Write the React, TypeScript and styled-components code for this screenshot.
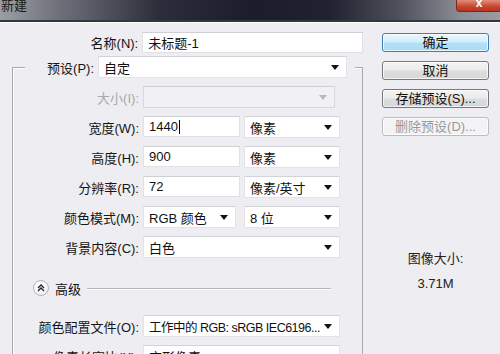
import React from "react";
import styled, { createGlobalStyle } from "styled-components";

const GlobalStyle = createGlobalStyle`
  html, body {
    margin: 0;
    padding: 0;
    background: #eeedf1;
  }
  body {
    font-family: "Liberation Sans", "Noto Sans CJK SC", sans-serif;
    font-size: 13px;
    color: #111;
  }
`;

const Window = styled.div`
  width: 500px;
  height: 354px;
  overflow: hidden;
  background: #eeedf1;
`;

const TitleBar = styled.div`
  height: 20px;
  display: flex;
  align-items: flex-start;
  justify-content: space-between;
  background: linear-gradient(
    90deg,
    #9c9ea5 0%,
    #6d7079 12%,
    #2b2e3a 32%,
    #1b1e2a 50%,
    #20232f 66%,
    #4f525d 80%,
    #8a8d95 92%,
    #9a9ca2 100%
  );
  border-bottom: 2px solid #34363e;
  box-shadow: 0 1px 0 #ffffff;
`;

const TitleText = styled.span`
  color: #1a1a1a;
  font-size: 13px;
  line-height: 13px;
  margin-top: -1px;
  padding-left: 1px;
`;

const CloseButton = styled.div`
  width: 44px;
  height: 11px;
  margin-right: -2px;
  background: linear-gradient(180deg, #e08f7c 0%, #c9452e 60%, #b83320 100%);
  border: 1px solid #7b2a1f;
  border-top: none;
  border-radius: 0 0 0 4px;
  display: flex;
  justify-content: center;
  color: #fff;
  font-size: 12px;
  line-height: 6px;
  font-weight: bold;
`;

const Body = styled.div`
  display: flex;
  align-items: flex-start;
`;

const LeftPane = styled.div`
  width: 363px;
  display: flex;
  flex-direction: column;
`;

const NameRow = styled.div`
  display: flex;
  align-items: center;
  margin-top: 10px;
  height: 20px;
`;

const Label = styled.label<{ $width: number; $disabled?: boolean }>`
  width: ${(p) => p.$width}px;
  text-align: right;
  padding-right: 4px;
  box-sizing: border-box;
  white-space: nowrap;
  color: ${(p) => (p.$disabled ? "#a8a8ac" : "#151515")};
  font-size: 13px;
`;

const TextBox = styled.div<{ $width: number }>`
  width: ${(p) => p.$width}px;
  height: 21px;
  box-sizing: border-box;
  background: #fff;
  border: 1px solid #e1e1e4;
  border-top-color: #cfcfd3;
  padding-left: 5px;
  display: flex;
  align-items: center;
  font-size: 13px;
  color: #111;
`;

const Caret = styled.span`
  display: inline-block;
  width: 1px;
  height: 14px;
  background: #000;
  margin-left: 1px;
`;

const SelectBox = styled.div<{ $width: number; $disabled?: boolean }>`
  width: ${(p) => p.$width}px;
  height: 22px;
  box-sizing: border-box;
  background: ${(p) => (p.$disabled ? "#f1f0f3" : "#fff")};
  border: 1px solid ${(p) => (p.$disabled ? "#d8d8dc" : "#e3e3e6")};
  border-top-color: ${(p) => (p.$disabled ? "#d0d0d4" : "#d3d3d7")};
  padding: 0 7px 0 5px;
  display: flex;
  align-items: center;
  justify-content: space-between;
  font-size: 13px;
  color: #111;
  white-space: nowrap;
`;

const SelectValue = styled.span<{ $tight?: boolean }>`
  font-size: ${(p) => (p.$tight ? "12.5px" : "13px")};
  letter-spacing: ${(p) => (p.$tight ? "-0.5px" : "0")};
`;

const Arrow = styled.span<{ $disabled?: boolean }>`
  flex: none;
  width: 0;
  height: 0;
  border-left: 4px solid transparent;
  border-right: 4px solid transparent;
  border-top: 5px solid ${(p) => (p.$disabled ? "#b8b8bc" : "#111")};
`;

const Group = styled.fieldset`
  margin: 4px 0 0 12px;
  padding: 0 0 40px 0;
  width: 351px;
  box-sizing: border-box;
  border: 1px solid #a9a9ae;
  border-bottom: none;
  box-shadow: inset 1px 1px 0 #fff;
  min-width: 0;
`;

const Legend = styled.legend`
  margin-left: 12px;
  padding: 0 8px 0 0;
  display: flex;
  align-items: center;
  background: #eeedf1;
`;

const Rows = styled.div`
  display: flex;
  flex-direction: column;
  gap: 8px;
  margin-top: 8px;
`;

const Row = styled.div`
  display: flex;
  align-items: center;
  height: 22px;
`;

const Pair = styled.div<{ $gap?: number }>`
  display: flex;
  gap: ${(p) => p.$gap ?? 4}px;
`;

const Advanced = styled.div`
  display: flex;
  align-items: center;
  margin: 22px 0 0 20px;
  height: 16px;
`;

const RoundToggle = styled.span`
  width: 14px;
  height: 14px;
  border-radius: 50%;
  border: 1px solid #b7b7bb;
  background: radial-gradient(circle at 40% 35%, #ffffff 0%, #f4f4f6 60%, #dcdce0 100%);
  display: flex;
  align-items: center;
  justify-content: center;
`;

const AdvancedText = styled.span`
  margin-left: 6px;
  font-size: 13px;
`;

const Rule = styled.span`
  flex: 0 0 244px;
  height: 1px;
  background: #b5b5ba;
  margin-left: 6px;
  box-shadow: 0 1px 0 #fff;
`;

const AdvancedRows = styled(Rows)`
  margin-top: 19px;
`;

const RightPane = styled.div`
  margin-left: 19px;
  display: flex;
  flex-direction: column;
  align-items: flex-start;
`;

const Button = styled.button<{ $primary?: boolean }>`
  width: 107px;
  height: 19px;
  margin-top: 9px;
  padding: 0;
  border-radius: 3px;
  font-family: "Liberation Sans", "Noto Sans CJK SC", sans-serif;
  font-size: 13px;
  line-height: 16px;
  color: ${(p) => (p.disabled ? "#9a9a9e" : "#111")};
  border: 1px solid
    ${(p) => (p.$primary ? "#3d7fae" : p.disabled ? "#b9bcc0" : "#77787c")};
  background: ${(p) =>
    p.$primary
      ? "linear-gradient(180deg, #e9f6fd 0%, #d2eefc 48%, #b4e0f7 52%, #a9dbf6 100%)"
      : p.disabled
      ? "#f3f3f5"
      : "linear-gradient(180deg, #f4f4f4 0%, #ebebeb 48%, #dedede 52%, #d6d6d6 100%)"};
  box-shadow: inset 0 0 0 1px rgba(255, 255, 255, 0.7);
  &:first-child {
    margin-top: 11px;
  }
`;

const SizeInfo = styled.div`
  margin-top: 112px;
  width: 107px;
  display: flex;
  flex-direction: column;
  align-items: center;
  gap: 9px;
  font-size: 13px;
  color: #222;
`;

function ChevronsUp() {
  return (
    <svg width="8" height="8" viewBox="0 0 8 8">
      <path d="M1 4 L4 1 L7 4 M1 7 L4 4 L7 7" fill="none" stroke="#222" strokeWidth="1.3" />
    </svg>
  );
}

function Select({
  value,
  width,
  disabled,
  tight,
}: {
  value: string;
  width: number;
  disabled?: boolean;
  tight?: boolean;
}) {
  return (
    <SelectBox $width={width} $disabled={disabled}>
      <SelectValue $tight={tight}>{value}</SelectValue>
      <Arrow $disabled={disabled} />
    </SelectBox>
  );
}

const LABEL_W = 130;

export default function App() {
  return (
    <Window>
      <GlobalStyle />
      <TitleBar>
        <TitleText>新建</TitleText>
        <CloseButton>x</CloseButton>
      </TitleBar>
      <Body>
        <LeftPane>
          <NameRow>
            <Label $width={143}>名称(N):</Label>
            <TextBox $width={222}>未标题-1</TextBox>
          </NameRow>
          <Group>
            <Legend>
              <Label $width={73}>预设(P):</Label>
              <Select value="自定" width={249} />
            </Legend>
            <Rows>
              <Row>
                <Label $width={LABEL_W} $disabled>大小(I):</Label>
                <Select value="" width={192} disabled />
              </Row>
              <Row>
                <Label $width={LABEL_W}>宽度(W):</Label>
                <Pair>
                  <TextBox $width={97}>
                    1440<Caret />
                  </TextBox>
                  <Select value="像素" width={96} />
                </Pair>
              </Row>
              <Row>
                <Label $width={LABEL_W}>高度(H):</Label>
                <Pair>
                  <TextBox $width={97}>900</TextBox>
                  <Select value="像素" width={96} />
                </Pair>
              </Row>
              <Row>
                <Label $width={LABEL_W}>分辨率(R):</Label>
                <Pair>
                  <TextBox $width={97}>72</TextBox>
                  <Select value="像素/英寸" width={96} />
                </Pair>
              </Row>
              <Row>
                <Label $width={LABEL_W}>颜色模式(M):</Label>
                <Pair $gap={8}>
                  <Select value="RGB 颜色" width={93} />
                  <Select value="8 位" width={96} />
                </Pair>
              </Row>
              <Row>
                <Label $width={LABEL_W}>背景内容(C):</Label>
                <Select value="白色" width={197} />
              </Row>
            </Rows>
            <Advanced>
              <RoundToggle>
                <ChevronsUp />
              </RoundToggle>
              <AdvancedText>高级</AdvancedText>
              <Rule />
            </Advanced>
            <AdvancedRows>
              <Row>
                <Label $width={LABEL_W}>颜色配置文件(O):</Label>
                <Select value="工作中的 RGB: sRGB IEC6196..." width={197} tight />
              </Row>
              <Row>
                <Label $width={LABEL_W}>像素长宽比(X):</Label>
                <Select value="方形像素" width={197} />
              </Row>
            </AdvancedRows>
          </Group>
        </LeftPane>
        <RightPane>
          <Button $primary>确定</Button>
          <Button>取消</Button>
          <Button>存储预设(S)...</Button>
          <Button disabled>删除预设(D)...</Button>
          <SizeInfo>
            <span>图像大小:</span>
            <span>3.71M</span>
          </SizeInfo>
        </RightPane>
      </Body>
    </Window>
  );
}
